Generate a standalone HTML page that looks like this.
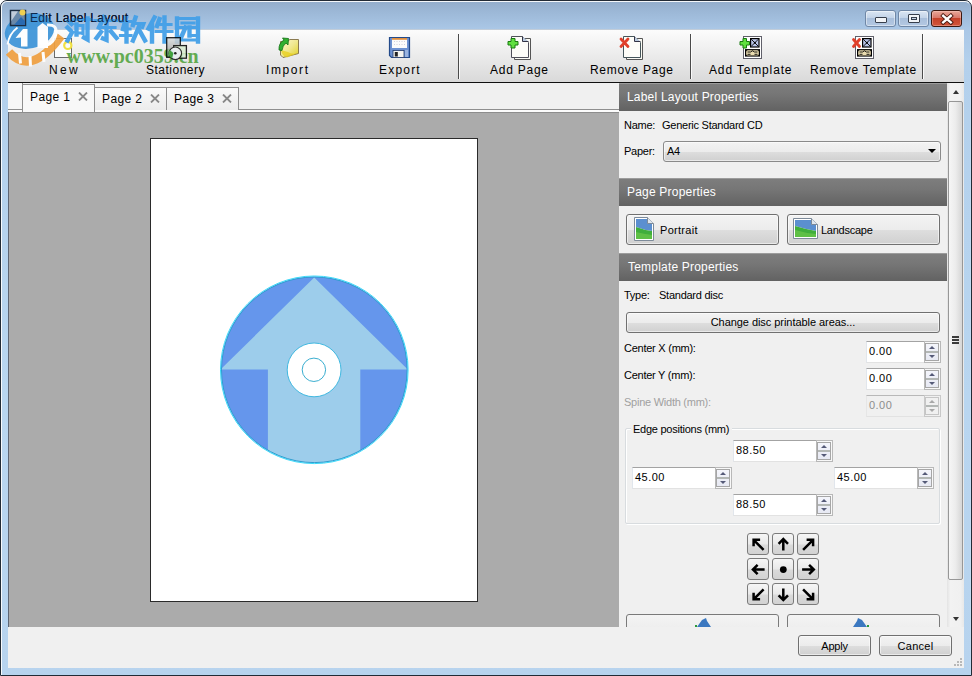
<!DOCTYPE html>
<html><head><meta charset="utf-8">
<style>
*{box-sizing:border-box;margin:0;padding:0}
html,body{width:972px;height:676px;overflow:hidden;background:#fff;font-family:"Liberation Sans",sans-serif;color:#000}
.a{position:absolute}
#frame{left:0;top:0;width:972px;height:676px;border:1px solid #222b36;border-radius:7px 7px 0 0;
 background:linear-gradient(#93adcb 0px,#9db9d8 12px,#aac7e6 28px,#b3d0ec 60px,#b9d6f0 400px,#b7d3ee 676px)}
#frame2{left:1px;top:1px;width:970px;height:674px;border:1px solid rgba(255,255,255,.9);border-bottom:none;border-right-color:rgba(255,255,255,.15);border-radius:6px 6px 0 0}
.tt{font-size:12px;letter-spacing:.4px;color:#000;white-space:nowrap;line-height:14px}
.rp{font-size:11px;letter-spacing:-.25px;white-space:nowrap;line-height:13px}
.hdr{background:linear-gradient(#7e7e7e,#767676 40%,#626262);box-shadow:inset 0 1px 0 #9c9c9c}
.ht{color:#fff;font-size:12px;letter-spacing:.2px;white-space:nowrap;line-height:14px}
.btn{border:1px solid #707070;border-radius:3px;background:linear-gradient(#f3f3f3 0%,#ececec 50%,#dedede 51%,#d0d0d0 100%);box-shadow:inset 0 0 0 1px rgba(255,255,255,.55)}
.fld{background:#fff;border:1px solid #d9d9d9;border-top-color:#b3b3b3;border-left-color:#c3c3c3}
.spin{border:1px solid #b5b5b5;background:#f0f0f0}
.sep{width:1px;background:#4a4a4a;box-shadow:1px 0 0 rgba(255,255,255,.8)}

.sp{position:absolute;height:22px}
.sp .f{position:absolute;left:0;top:0;bottom:0;background:#fff;border-top:1px solid #a3a3a3;border-left:1px solid #e1e6ec;border-bottom:1px solid #e2e2e2}
.sp .v{position:absolute;left:2px;top:3px;font-size:11px;line-height:13px;white-space:nowrap;letter-spacing:.45px}
.sp .sb{position:absolute;right:0;top:0;width:17px;height:22px;border:1px solid #b8b8b8;background:#f8f8f8}
.sp .in{position:absolute;left:0;top:1px;width:14px;height:18px;border:1px solid #a6a6a6;background:linear-gradient(#f4f5fb,#e7e9f3)}
.sp .in:before{content:"";position:absolute;left:0;top:7px;width:12px;height:2px;background:#b3b7b5}
.sp .up{position:absolute;left:3px;top:2px;width:0;height:0;border-left:3px solid transparent;border-right:3px solid transparent;border-bottom:3.5px solid #555a78}
.sp .dn{position:absolute;left:3px;top:11px;width:0;height:0;border-left:3px solid transparent;border-right:3px solid transparent;border-top:3.5px solid #555a78}
.sp.dis .f{background:#f0f0f0;border-top-color:#b8b8b8;border-left-color:#e6e6e6}
.sp.dis .v{color:#8d8d8d}
.sp.dis .sb{background:#f0f0f0;border-color:#c8c8c8}
.sp.dis .in{background:#f0f0f0;border-color:#c5c5c5}
.sp.dis .up{border-bottom-color:#a8a8a8}.sp.dis .dn{border-top-color:#a8a8a8}
.ab{position:absolute;width:22px;height:22px;border:1px solid #7b7b7b;border-radius:3px;background:linear-gradient(#f6f6f6,#e9e9e9 50%,#dadada 55%,#d2d2d2)}
.ab svg{position:absolute;left:0;top:0}

.cb{position:absolute;top:10px;height:17px;border:1px solid #6f87a6;border-radius:3px;
 background:linear-gradient(#dbe6f3 0%,#c3d4e9 45%,#a9bfdb 50%,#b3c8e2 100%);box-shadow:inset 0 0 0 1px rgba(255,255,255,.45)}
.cb.x{border-color:#3c1810;background:linear-gradient(#e9a899 0%,#d9786a 45%,#c5422a 50%,#d2553a 100%);box-shadow:inset 0 0 0 1px rgba(255,220,210,.35)}
</style></head><body>
<div id="frame" class="a"></div>
<div id="frame2" class="a"></div>

<!-- client bg -->
<div class="a" style="left:8px;top:30px;width:956px;height:638px;background:#f0f0f0"></div>
<!-- toolbar -->
<div class="a" style="left:8px;top:29px;width:956px;height:1px;background:#c2cdd9"></div>
<div class="a" style="left:8px;top:30px;width:956px;height:52px;background:linear-gradient(#fcfcfc,#ebebeb 50%,#d9d9d9)"></div>
<div class="a" style="left:8px;top:82px;width:956px;height:1px;background:#101010"></div>
<div class="a sep" style="left:458px;top:34px;height:45px"></div>
<div class="a sep" style="left:690px;top:34px;height:45px"></div>
<div class="a sep" style="left:922px;top:34px;height:45px"></div>

<!-- toolbar icons -->
<svg class="a" style="left:50px;top:34px" width="28" height="26" viewBox="50 34 28 26">
 <rect x="54.5" y="38.5" width="17" height="19" fill="#fbfbfb" stroke="#6a6a6a" stroke-width="1"/>
 <circle cx="67.8" cy="45.4" r="3.6" fill="none" stroke="#f0e040" stroke-width="2.2"/>
</svg>

<svg class="a" style="left:274px;top:34px" width="30" height="27" viewBox="274 34 30 27">
 <defs><linearGradient id="fg" x1="0" y1="0" x2="1" y2="1"><stop offset="0" stop-color="#fff8d0"/><stop offset=".5" stop-color="#f0e890"/><stop offset="1" stop-color="#e0d020"/></linearGradient></defs>
 <path d="M280.5 41.5 H288 L289.5 39.5 H298.5 V53.5 L283 57.5 L280.5 55 Z" fill="url(#fg)" stroke="#8a7a50" stroke-width="1"/>
 <path d="M281 50 Q282 56 287 57.5 L298 53 Q292 55 288 52 Z" fill="#e8d020" opacity=".8"/>
 <path d="M279 50 Q278.5 43 284 40 L282.5 38 L288.5 38.5 L288 45 L286 43 Q282.5 45.5 282 50.5 Z" fill="#30b030" stroke="#107010" stroke-width=".8"/>
</svg>
<svg class="a" style="left:386px;top:34px" width="27" height="27" viewBox="386 34 27 27">
 <path d="M389.5 37.5 H409.5 V57.5 H391.5 L389.5 55.5 Z" fill="#6d92d2" stroke="#234a8a" stroke-width="1.2"/>
 <rect x="392" y="38" width="15" height="10" fill="#fbfbfb"/>
 <rect x="392" y="38" width="15" height="1.8" fill="#e09040"/>
 <path d="M394 41.5 H405 M394 44.5 H405" stroke="#c8c8d8" stroke-width=".8" stroke-dasharray="1 1.5"/>
 <rect x="393" y="50.5" width="11" height="7" fill="#f4f4f0" stroke="#223a6a" stroke-width=".8"/>
 <rect x="394.8" y="52" width="3" height="4.5" fill="#222"/>
 <rect x="405" y="50" width="3" height="7" fill="#9ab4e0"/>
</svg>
<svg class="a" style="left:505px;top:33px" width="30" height="29" viewBox="505 33 30 29">
 <path d="M514.5 38.5 H530.5 V59.5 H514.5 Z" fill="#fbfbf4" stroke="#555" stroke-width="1"/>
 <path d="M511.5 36.5 H522.5 L528.5 42.5 V57.5 H511.5 Z" fill="#fdfdf8" stroke="#50505a" stroke-width="1"/>
 <path d="M522.5 36.5 V41.5 H528.5" fill="#b8c8dc" stroke="#334" stroke-width="1"/>
 <path d="M511 38.5 H515 V41.5 H518 V45 H515 V48 H511 V45 H508 V41.5 H511 Z" fill="#60e040" stroke="#187a10" stroke-width="1"/>
</svg>
<svg class="a" style="left:617px;top:33px" width="30" height="29" viewBox="617 33 30 29">
 <path d="M626.5 38.5 H642.5 V59.5 H626.5 Z" fill="#fbfbf4" stroke="#555" stroke-width="1"/>
 <path d="M623.5 36.5 H634.5 L640.5 42.5 V57.5 H623.5 Z" fill="#fdfdf8" stroke="#45555a" stroke-width="1"/>
 <path d="M634.5 36.5 V41.5 H640.5" fill="#b8c8dc" stroke="#334" stroke-width="1"/>
 <path d="M621 39 L628 46.5 M628 39 L621 46.5" stroke="#e0402a" stroke-width="2.8" stroke-linecap="round"/>
</svg>
<svg class="a" style="left:738px;top:33px" width="27" height="29" viewBox="738 33 27 29">
 <rect x="743.5" y="36.5" width="18" height="22" fill="#fff" stroke="#60606a" stroke-width="1"/>
 <rect x="750" y="38" width="9.6" height="9.6" fill="#000"/>
 <rect x="751.2" y="39.2" width="7.2" height="7.2" fill="#b8c4e8"/>
 <path d="M751.2 39.2 L758.4 46.4 M758.4 39.2 L751.2 46.4" stroke="#000" stroke-width=".9" fill="none"/>
 <circle cx="754.8" cy="42.8" r="1" fill="#000"/>
 <rect x="745" y="49.1" width="15" height="7.5" fill="#000"/>
 <rect x="746.2" y="50.3" width="12.6" height="5.1" fill="#eadcb0" rx="1.5"/>
 <path d="M747.5 52 H750.5 L752.5 50.8 L754.5 52 H757.5 M747.5 54.3 H750.5 M754.5 54.3 H757.5" stroke="#000" stroke-width=".9" fill="none"/>
 <path d="M743 38.5 H746.5 V41.5 H749.5 V45 H746.5 V48 H743 V45 H740 V41.5 H743 Z" fill="#60e040" stroke="#187a10" stroke-width="1"/>
</svg>
<svg class="a" style="left:850px;top:33px" width="27" height="29" viewBox="850 33 27 29">
 <rect x="855.5" y="36.5" width="18" height="22" fill="#fff" stroke="#60606a" stroke-width="1"/>
 <rect x="862" y="38" width="9.6" height="9.6" fill="#000"/>
 <rect x="863.2" y="39.2" width="7.2" height="7.2" fill="#b8c4e8"/>
 <path d="M863.2 39.2 L870.4 46.4 M870.4 39.2 L863.2 46.4" stroke="#000" stroke-width=".9" fill="none"/>
 <circle cx="866.8" cy="42.8" r="1" fill="#000"/>
 <rect x="857" y="49.1" width="15" height="7.5" fill="#000"/>
 <rect x="858.2" y="50.3" width="12.6" height="5.1" fill="#eadcb0" rx="1.5"/>
 <path d="M859.5 52 H862.5 L864.5 50.8 L866.5 52 H869.5 M859.5 54.3 H862.5 M866.5 54.3 H869.5" stroke="#000" stroke-width=".9" fill="none"/>
 <path d="M853.5 39.5 L859.5 46.5 M859.5 39.5 L853.5 46.5" stroke="#e0402a" stroke-width="2.8" stroke-linecap="round"/>
</svg>
<div class="a tt" style="left:49px;top:63px;letter-spacing:2.3px">New</div>
<div class="a tt" style="left:146px;top:63px;letter-spacing:.5px">Stationery</div>
<div class="a tt" style="left:266px;top:63px;letter-spacing:1.6px">Import</div>
<div class="a tt" style="left:379px;top:63px;letter-spacing:1.2px">Export</div>
<div class="a tt" style="left:490px;top:63px;letter-spacing:.76px">Add Page</div>
<div class="a tt" style="left:590px;top:63px;letter-spacing:.7px">Remove Page</div>
<div class="a tt" style="left:709px;top:63px;letter-spacing:.85px">Add Template</div>
<div class="a tt" style="left:810px;top:63px;letter-spacing:.7px">Remove Template</div>

<div class="cb" style="left:865px;width:31px"><div class="a" style="left:9px;top:6px;width:12px;height:6px;border:1px solid #373f4c;border-radius:1px;background:#f2f4f7"></div></div>
<div class="cb" style="left:898px;width:31px"><div class="a" style="left:9px;top:3px;width:12px;height:9px;border:1px solid #373f4c;border-radius:1px;background:#f2f4f7"><div class="a" style="left:2px;top:2px;width:6px;height:3px;border:1px solid #373f4c;background:#c9d6e6"></div></div></div>
<div class="cb x" style="left:931px;width:31px"><svg class="a" style="left:8px;top:2px" width="14" height="12" viewBox="0 0 14 12"><path d="M3.2 2.8 L10.8 9.4 M10.8 2.8 L3.2 9.4" stroke="#4a1a10" stroke-width="4.2" stroke-linecap="square"/><path d="M3.2 2.8 L10.8 9.4 M10.8 2.8 L3.2 9.4" stroke="#fff" stroke-width="2.4" stroke-linecap="square"/></svg></div>
<!-- title -->
<div class="a tt" style="left:30px;top:11px;letter-spacing:.33px;color:#000">Edit Label Layout</div>

<!-- tab bar -->
<div class="a" style="left:8px;top:83px;width:611px;height:29px;background:#f0f0f0"></div>
<div class="a" style="left:8px;top:109px;width:611px;height:1px;background:#8e8e8e"></div>
<div class="a" style="left:8px;top:110px;width:611px;height:2px;background:#fbfbfb"></div>
<div class="a" style="left:8px;top:83px;width:15px;height:27px;border:1px solid #8e8e8e;border-left:none;border-top:none;background:#f6f6f6"></div>
<div class="a" style="left:94px;top:87px;width:73px;height:23px;border:1px solid #8e8e8e;border-bottom:none;background:linear-gradient(#fafafa,#ececec)"></div>
<div class="a" style="left:166px;top:87px;width:73px;height:23px;border:1px solid #8e8e8e;border-bottom:none;background:linear-gradient(#fafafa,#ececec)"></div>
<div class="a" style="left:22px;top:84px;width:73px;height:28px;border:1px solid #8e8e8e;border-bottom:none;background:#f8f8f8"></div>
<div class="a tt" style="left:30px;top:90px;letter-spacing:.4px">Page 1</div>
<div class="a tt" style="left:102px;top:92px;letter-spacing:.4px">Page 2</div>
<div class="a tt" style="left:174px;top:92px;letter-spacing:.4px">Page 3</div>

<svg class="a" style="left:78px;top:92px" width="10" height="9" viewBox="0 0 10 9"><path d="M1 0.5 L9 8.5 M9 0.5 L1 8.5" stroke="#888" stroke-width="1.8"/></svg>
<svg class="a" style="left:150px;top:94px" width="10" height="9" viewBox="0 0 10 9"><path d="M1 0.5 L9 8.5 M9 0.5 L1 8.5" stroke="#888" stroke-width="1.8"/></svg>
<svg class="a" style="left:222px;top:94px" width="10" height="9" viewBox="0 0 10 9"><path d="M1 0.5 L9 8.5 M9 0.5 L1 8.5" stroke="#888" stroke-width="1.8"/></svg>
<!-- canvas -->
<div class="a" style="left:8px;top:112px;width:611px;height:515px;background:#ababab"></div>
<div class="a" style="left:8px;top:112px;width:611px;height:1px;background:#8c8c8c"></div>
<div class="a" style="left:8px;top:112px;width:1px;height:515px;background:#5f6674"></div>
<div class="a" style="left:150px;top:138px;width:328px;height:464px;border:1px solid #2a2a2a;background:#fff"></div>

<svg class="a" style="left:200px;top:260px" width="230" height="220" viewBox="200 260 230 220">
<defs><clipPath id="dc"><circle cx="314.3" cy="369.8" r="93.3"/></clipPath></defs>
<circle cx="314.3" cy="369.8" r="93.3" fill="#6596ec"/>
<g clip-path="url(#dc)" fill="#9dcdeb">
<path d="M314.2 277.5 L407.8 369.4 L360.3 369.4 L360.3 470 L267.9 470 L267.9 369.4 L220.6 369.4 Z"/>
</g>
<circle cx="314.3" cy="369.8" r="92.8" fill="none" stroke="#2f9ed0" stroke-width="1"/><circle cx="314.3" cy="369.8" r="93.8" fill="none" stroke="#3ad8f8" stroke-width="1"/>
<circle cx="314.1" cy="369.9" r="26.9" fill="#fff" stroke="#40b8e0" stroke-width="1"/>
<circle cx="313.9" cy="369.8" r="11.7" fill="none" stroke="#3aaed0" stroke-width="1"/>
</svg>
<!-- right panel -->
<div class="a" style="left:619px;top:83px;width:345px;height:544px;background:#f0f0f0"></div>
<div class="a hdr" style="left:619px;top:83px;width:328px;height:28px"></div>
<div class="a ht" style="left:627px;top:90px">Label Layout Properties</div>
<div class="a rp" style="left:624px;top:119px">Name:</div>
<div class="a rp" style="left:662px;top:119px">Generic Standard CD</div>
<div class="a rp" style="left:624px;top:145px">Paper:</div>
<div class="a btn" style="left:663px;top:141px;width:278px;height:21px;border-color:#8a8a8a"></div>
<div class="a rp" style="left:667px;top:145px">A4</div>
<div class="a" style="left:928px;top:149px;width:0;height:0;border-left:4px solid transparent;border-right:4px solid transparent;border-top:4px solid #000"></div>

<div class="a hdr" style="left:619px;top:178px;width:328px;height:28px"></div>
<div class="a ht" style="left:627px;top:185px">Page Properties</div>
<div class="a btn" style="left:626px;top:214px;width:153px;height:31px"></div>
<div class="a btn" style="left:787px;top:214px;width:153px;height:31px"></div>
<svg class="a" style="left:634px;top:217px" width="21" height="24" viewBox="0 0 21 24"><path d="M0.5 0.5 H13.5 L19.5 6.5 V23.5 H0.5 Z" fill="#fff" stroke="#7d8a99"/><path d="M2 2 H13 L18 7 V14 Q10 13 2 10 Z" fill="#5b8fd0"/><path d="M2 10 Q10 13 18 14 V22 H2 Z" fill="#3fae3c"/><path d="M2 15 Q10 17 18 18 V22 H2 Z" fill="#6cc84a" opacity=".7"/><path d="M13.5 0.5 V6.5 H19.5" fill="#dfe6ee" stroke="#7d8a99"/></svg>
<svg class="a" style="left:793px;top:218px" width="25" height="21" viewBox="0 0 25 21"><path d="M0.5 0.5 H18.5 L24.5 6.5 V20.5 H0.5 Z" fill="#fff" stroke="#7d8a99"/><path d="M2 2 H18 L23 7 V13 Q12 11 2 8 Z" fill="#5b8fd0"/><path d="M2 8 Q12 11 23 13 V19 H2 Z" fill="#3fae3c"/><path d="M2 12 Q12 15 23 16 V19 H2 Z" fill="#6cc84a" opacity=".7"/><path d="M18.5 0.5 V6.5 H24.5" fill="#dfe6ee" stroke="#7d8a99"/></svg>
<div class="a rp" style="left:660px;top:224px;letter-spacing:.3px">Portrait</div>
<div class="a rp" style="left:821px;top:224px">Landscape</div>

<div class="a hdr" style="left:619px;top:253px;width:328px;height:28px"></div>
<div class="a ht" style="left:628px;top:260px">Template Properties</div>
<div class="a rp" style="left:624px;top:289px">Type:</div>
<div class="a rp" style="left:659px;top:289px">Standard disc</div>
<div class="a btn" style="left:626px;top:312px;width:314px;height:21px"></div>
<div class="a rp" style="left:626px;top:316px;width:314px;text-align:center;letter-spacing:-.05px">Change disc printable areas...</div>

<div class="a rp" style="left:624px;top:342px">Center X (mm):</div>
<div class="a rp" style="left:624px;top:369px">Center Y (mm):</div>
<div class="a rp" style="left:624px;top:396px;color:#a0a0a0">Spine Width (mm):</div>

<div class="a" style="left:625px;top:428px;width:315px;height:96px;border:1px solid #d8dcdf;border-radius:2px;box-shadow:inset 1px 1px 0 #fff, 1px 1px 0 #fff"></div>
<div class="a" style="left:631px;top:424px;width:101px;height:12px;background:#f0f0f0"></div>
<div class="a rp" style="left:633px;top:423px">Edge positions (mm)</div>

<div class="sp" style="left:866px;top:341px;width:75px"><div class="f" style="width:58px"><div class="v">0.00</div></div><div class="sb"><div class="in"><div class="up"></div><div class="dn"></div></div></div></div>
<div class="sp" style="left:866px;top:368px;width:75px"><div class="f" style="width:58px"><div class="v">0.00</div></div><div class="sb"><div class="in"><div class="up"></div><div class="dn"></div></div></div></div>
<div class="sp dis" style="left:866px;top:395px;width:75px"><div class="f" style="width:58px"><div class="v">0.00</div></div><div class="sb"><div class="in"><div class="up"></div><div class="dn"></div></div></div></div>
<div class="sp" style="left:733px;top:440px;width:100px"><div class="f" style="width:83px"><div class="v">88.50</div></div><div class="sb"><div class="in"><div class="up"></div><div class="dn"></div></div></div></div>
<div class="sp" style="left:632px;top:467px;width:100px"><div class="f" style="width:83px"><div class="v">45.00</div></div><div class="sb"><div class="in"><div class="up"></div><div class="dn"></div></div></div></div>
<div class="sp" style="left:834px;top:467px;width:100px"><div class="f" style="width:83px"><div class="v">45.00</div></div><div class="sb"><div class="in"><div class="up"></div><div class="dn"></div></div></div></div>
<div class="sp" style="left:733px;top:494px;width:100px"><div class="f" style="width:83px"><div class="v">88.50</div></div><div class="sb"><div class="in"><div class="up"></div><div class="dn"></div></div></div></div>
<div class="ab" style="left:747px;top:533px"><svg width="22" height="22" viewBox="0 0 22 22"><g fill="none" stroke="#000" stroke-width="2.5" transform="translate(.6 .8)" stroke-linecap="butt" stroke-linejoin="miter"><path d="M15 15 L5.5 5.5 M5 11.5 V5 H11.5" /></g></svg></div>
<div class="ab" style="left:772px;top:533px"><svg width="22" height="22" viewBox="0 0 22 22"><g fill="none" stroke="#000" stroke-width="2.5" transform="translate(.6 .8)" stroke-linecap="butt" stroke-linejoin="miter"><path d="M9.7 15.8 V4.5 M5 9 L9.7 4.3 L14.4 9" /></g></svg></div>
<div class="ab" style="left:797px;top:533px"><svg width="22" height="22" viewBox="0 0 22 22"><g fill="none" stroke="#000" stroke-width="2.5" transform="translate(.6 .8)" stroke-linecap="butt" stroke-linejoin="miter"><path d="M4.5 15 L14 5.5 M8 5 H14.5 V11.5" /></g></svg></div>
<div class="ab" style="left:747px;top:558px"><svg width="22" height="22" viewBox="0 0 22 22"><g fill="none" stroke="#000" stroke-width="2.5" transform="translate(.6 .8)" stroke-linecap="butt" stroke-linejoin="miter"><path d="M16 9.7 H4.5 M9 5 L4.3 9.7 L9 14.4" /></g></svg></div>
<div class="ab" style="left:772px;top:558px"><svg width="22" height="22" viewBox="0 0 22 22"><g fill="none" stroke="#000" stroke-width="2.5" transform="translate(.6 .8)" stroke-linecap="butt" stroke-linejoin="miter"><circle cx="9.7" cy="9.8" r="3.4" fill="#000" stroke="none"/></g></svg></div>
<div class="ab" style="left:797px;top:558px"><svg width="22" height="22" viewBox="0 0 22 22"><g fill="none" stroke="#000" stroke-width="2.5" transform="translate(.6 .8)" stroke-linecap="butt" stroke-linejoin="miter"><path d="M3.5 9.7 H15 M10.5 5 L15.2 9.7 L10.5 14.4" /></g></svg></div>
<div class="ab" style="left:747px;top:583px"><svg width="22" height="22" viewBox="0 0 22 22"><g fill="none" stroke="#000" stroke-width="2.5" transform="translate(.6 .8)" stroke-linecap="butt" stroke-linejoin="miter"><path d="M15 4.5 L5.5 14 M5 8 V14.5 H11.5" /></g></svg></div>
<div class="ab" style="left:772px;top:583px"><svg width="22" height="22" viewBox="0 0 22 22"><g fill="none" stroke="#000" stroke-width="2.5" transform="translate(.6 .8)" stroke-linecap="butt" stroke-linejoin="miter"><path d="M9.7 3.6 V15 M5 10.5 L9.7 15.2 L14.4 10.5" /></g></svg></div>
<div class="ab" style="left:797px;top:583px"><svg width="22" height="22" viewBox="0 0 22 22"><g fill="none" stroke="#000" stroke-width="2.5" transform="translate(.6 .8)" stroke-linecap="butt" stroke-linejoin="miter"><path d="M4.5 4.5 L14 14 M8 14.5 H14.5 V8" /></g></svg></div>
<!-- scrollbar -->
<div class="a" style="left:947px;top:83px;width:17px;height:544px;background:linear-gradient(90deg,#e3e3e3,#f2f2f2 20%,#f0f0f0 80%,#e8e8e8)"></div>
<div class="a" style="left:953px;top:90px;width:0;height:0;border-left:3.5px solid transparent;border-right:3.5px solid transparent;border-bottom:4px solid #333"></div>
<div class="a" style="left:953px;top:617px;width:0;height:0;border-left:3.5px solid transparent;border-right:3.5px solid transparent;border-top:4px solid #333"></div>
<div class="a" style="left:948px;top:101px;width:15px;height:479px;border:1px solid #979797;border-radius:2px;background:linear-gradient(90deg,#f6f6f6,#ececec 50%,#d6d6d6)"></div>
<div class="a" style="left:952px;top:336px;width:7px;height:2px;background:#3a3a3a"></div>
<div class="a" style="left:952px;top:339px;width:7px;height:2px;background:#3a3a3a"></div>
<div class="a" style="left:952px;top:342px;width:7px;height:2px;background:#3a3a3a"></div>
<!-- partial buttons -->
<div class="a" style="left:626px;top:614px;width:153px;height:20px;border:1px solid #7a7a7a;border-radius:3px;background:linear-gradient(#f4f4f4,#ececec)"></div>
<div class="a" style="left:787px;top:614px;width:153px;height:20px;border:1px solid #7a7a7a;border-radius:3px;background:linear-gradient(#f4f4f4,#ececec)"></div>
<svg class="a" style="left:694px;top:617px" width="20" height="10"><path d="M3 10 L8 3 L12 1 L13 4 L17 10 Z" fill="#3b78c0"/><rect x="1" y="8" width="2" height="2" fill="#2a9a3a"/></svg>
<svg class="a" style="left:850px;top:617px" width="20" height="10"><path d="M3 10 L7 4 L8 1 L12 3 L17 10 Z" fill="#3b78c0"/><rect x="17" y="8" width="2" height="2" fill="#2a9a3a"/></svg>
<div class="a" style="left:8px;top:627px;width:956px;height:41px;background:#f0f0f0"></div>
<!-- bottom -->
<div class="a btn" style="left:798px;top:635px;width:73px;height:21px"></div>
<div class="a btn" style="left:879px;top:635px;width:73px;height:21px"></div>
<div class="a rp" style="left:798px;top:640px;width:73px;text-align:center">Apply</div>
<div class="a rp" style="left:879px;top:640px;width:73px;text-align:center;letter-spacing:.3px">Cancel</div>

<div class="a" style="left:960px;top:658px;width:2px;height:2px;background:#b8b8b8"></div><div class="a" style="left:957px;top:661px;width:2px;height:2px;background:#b8b8b8"></div><div class="a" style="left:960px;top:661px;width:2px;height:2px;background:#b8b8b8"></div><div class="a" style="left:954px;top:664px;width:2px;height:2px;background:#b8b8b8"></div><div class="a" style="left:957px;top:664px;width:2px;height:2px;background:#b8b8b8"></div><div class="a" style="left:960px;top:664px;width:2px;height:2px;background:#b8b8b8"></div>
<!-- watermark -->
<svg class="a" style="left:0;top:0" width="220" height="72" viewBox="0 0 220 72">
 <g opacity=".92">
 <path d="M9 52 Q31 77 61 36" fill="none" stroke="#f0a040" stroke-width="8.5"/>
 <path d="M19.5 53 L20.5 63.5 M30 56 L30.5 66.5 M43 52 L44 62" stroke="#fff" stroke-width="3"/>
 <ellipse cx="29.5" cy="31" rx="25" ry="17.5" transform="rotate(-12 29.5 31)" fill="#3c94d8"/>
 <path d="M7.5 44.5 Q9 34 17.5 27.5" fill="none" stroke="#fff" stroke-width="1.8"/>
 <path d="M15.5 38 L23 29 H27.5 V46.5 H21 V37.5 Z" fill="#fff"/>
 <path d="M37.5 48 V27 L42.5 23 L48 27 V48 Z" fill="#fff"/>
 <path d="M47 25 Q57.5 24 56 34 Q54 43 47 45" fill="none" stroke="#fff" stroke-width="3"/>
 </g>
 <g fill="none" stroke="#44a0e8" stroke-linecap="square" opacity=".95">
  <g transform="translate(66 16.5)">
   <path stroke-width="4.4" d="M2.5 4.5 L5.5 7.5 M1.5 11 L4.5 14 M1.5 24 L6 16 M21.5 2 V23 L18 21 M10.5 8 V18"/>
   <path stroke-width="3.2" d="M8 3 H25 M10.5 9 H17 V17 M10.5 16.5 H17"/>
  </g>
  <g transform="translate(93 16.5)">
   <path stroke-width="4.4" d="M11 0.5 L6 11 M13.5 7 V23.5 L10 22 M8 15.5 L3.5 21.5 M18 15 L23.5 21.5"/>
   <path stroke-width="3.2" d="M2 4 H24 M6 11 H22"/>
  </g>
  <g transform="translate(120 16.5)">
   <path stroke-width="4.4" d="M6.5 8 V25 M6 1.5 L3 12.5 M15.5 1 L13 8.5 M19.5 9 L13 24 M19.5 14 L25 24"/>
   <path stroke-width="3.2" d="M1 5 H10.5 M3 12.5 H10 M0.5 19 H11 M14 7 H24 L22.5 11"/>
  </g>
  <g transform="translate(147 16.5)">
   <path stroke-width="4.4" d="M7.5 1 L1.5 12 M5 8 V25 M17.5 1 V25 M12.5 2.5 L10 9.5"/>
   <path stroke-width="3.2" d="M11 8 H24 M9 15 H25"/>
  </g>
  <g transform="translate(175 16.5)">
   <path stroke-width="4.4" d="M2 2 V25 M23 2 V25 M10.5 11 L6.5 20 M14.5 11 V19"/>
   <path stroke-width="3.2" d="M2 2 H23 M2 23.5 H23 M7 6.5 H19 M5 11 H21 M14.5 19 H20"/>
  </g>
 </g>
 <text x="66.5" y="63" font-family="Liberation Serif" font-weight="bold" font-size="20" fill="#5ca84a" opacity=".95">www.pc0359.cn</text>
</svg>
<svg class="a" style="left:162px;top:34px;opacity:.85" width="28" height="27" viewBox="162 34 28 27">
 <defs><linearGradient id="sg" x1="0" y1="0" x2="0" y2="1"><stop offset="0" stop-color="#d8dde0"/><stop offset=".5" stop-color="#b8b8b8"/><stop offset="1" stop-color="#40a040"/></linearGradient></defs>
 <rect x="166.7" y="37.7" width="13.6" height="19.6" fill="url(#sg)" stroke="#000" stroke-width="1.3"/>
 <rect x="173.7" y="45.6" width="12.7" height="12.6" fill="#d8ecd0" stroke="#000" stroke-width="1.3"/>
 <circle cx="175.3" cy="53.3" r="6.3" fill="#e8eef0" stroke="#111" stroke-width="1.1"/>
 <path d="M169.5 50 A6 6 0 0 0 172 58.5 L173.5 53 Z" fill="#3aa03a"/>
 <circle cx="175.3" cy="53.3" r="1.3" fill="#000"/>
</svg>
<svg class="a" style="left:9px;top:9px" width="18" height="18" viewBox="0 0 18 18">
 <rect x="1.5" y="1.5" width="15" height="15" fill="#6a88a8" stroke="#1c2c40" stroke-width="1.5"/>
 <path d="M2.3 2.3 H9 L2.3 12 Z" fill="#d8dde6" opacity=".8"/>
 <path d="M5 16 L12 8 L16 12 V16 Z" fill="#2a6ab0"/>
 <circle cx="13.5" cy="3.5" r="3" fill="#f0d050"/>
</svg>
<div class="a tt" style="left:30px;top:11px;letter-spacing:.33px;color:#0a1a3a;opacity:.85">Edit Label Layout</div>
</body></html>
